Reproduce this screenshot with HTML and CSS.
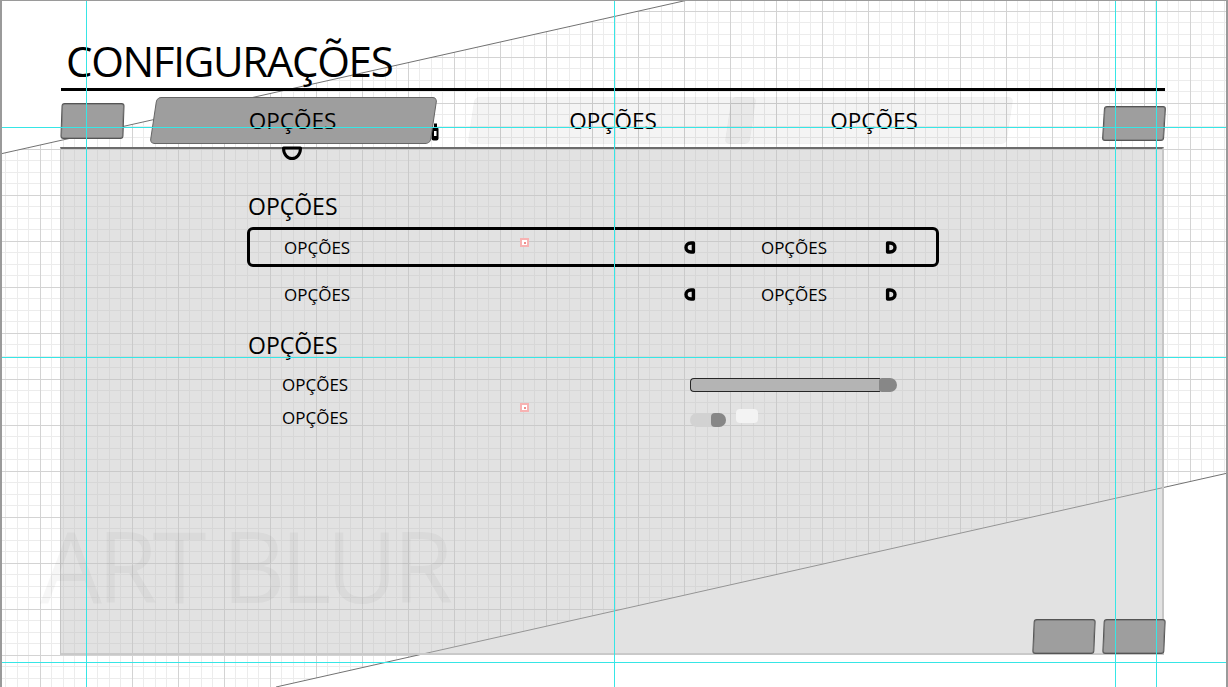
FILE: index.html
```html
<!DOCTYPE html>
<html lang="pt">
<head>
<meta charset="utf-8">
<title>Configurações</title>
<link rel="stylesheet" href="styles.css">
</head>
<body>
<div class="stage">
  <div class="grid-band"><div class="grid"></div></div>
  <svg class="diagonals" width="1228" height="687" viewBox="0 0 1228 687">
    <line x1="0" y1="154" x2="688" y2="0"/>
    <line x1="276" y1="687" x2="1228" y2="473"/>
  </svg>

  <div class="screen">
    <header class="header">
      <h1 class="title">CONFIGURAÇÕES</h1>
      <div class="rule"></div>
    </header>

    <nav class="tabs">
      <button class="btn btn-left" aria-label="anterior"></button>
      <div class="tab tab-active"><span class="tab-label">OPÇÕES</span></div>
      <div class="tab tab-idle tab-second"><span class="tab-label">OPÇÕES</span></div>
      <div class="tab tab-idle tab-third"><span class="tab-label">OPÇÕES</span></div>
      <button class="btn btn-right" aria-label="próximo"></button>
      <svg class="tab-glyph" width="8" height="18" viewBox="0 0 8 18">
        <rect x="3" y="0.5" width="3" height="4.5" fill="#000"/>
        <rect x="0.5" y="4" width="7" height="13.5" rx="2" fill="#000"/>
        <rect x="3" y="8" width="2.5" height="5" fill="#fff"/>
      </svg>
    </nav>

    <section class="panel">
      <div class="group">
        <h2 class="group-title">OPÇÕES</h2>
        <div class="row row-selected">
          <span class="row-label">OPÇÕES</span>
          <div class="selector">
            <svg class="arrow" width="12" height="13" viewBox="0 0 12 13"><path d="M9.4 2H7C3.6 2 2 4.3 2 6.5S3.6 11 7 11H9.4Z"/></svg>
            <span class="selector-value">OPÇÕES</span>
            <svg class="arrow" width="12" height="13" viewBox="0 0 12 13"><path d="M2.6 2H5C8.4 2 10 4.3 10 6.5S8.4 11 5 11H2.6Z"/></svg>
          </div>
        </div>
        <div class="row">
          <span class="row-label">OPÇÕES</span>
          <div class="selector">
            <svg class="arrow" width="12" height="13" viewBox="0 0 12 13"><path d="M9.4 2H7C3.6 2 2 4.3 2 6.5S3.6 11 7 11H9.4Z"/></svg>
            <span class="selector-value">OPÇÕES</span>
            <svg class="arrow" width="12" height="13" viewBox="0 0 12 13"><path d="M2.6 2H5C8.4 2 10 4.3 10 6.5S8.4 11 5 11H2.6Z"/></svg>
          </div>
        </div>
      </div>

      <div class="group group-second">
        <h2 class="group-title">OPÇÕES</h2>
        <div class="srow">
          <span class="srow-label">OPÇÕES</span>
          <div class="slider">
            <div class="slider-track"></div>
            <div class="slider-knob"></div>
          </div>
        </div>
        <div class="srow">
          <span class="srow-label">OPÇÕES</span>
          <div class="toggle-group">
            <div class="toggle"><div class="toggle-knob"></div></div>
            <div class="chip"></div>
          </div>
        </div>
      </div>

      <footer class="panel-footer">
        <button class="btn btn-foot" aria-label="voltar"></button>
        <button class="btn btn-foot" aria-label="aceitar"></button>
      </footer>
    </section>
  </div>

  <div class="watermark">ART BLUR</div>

  <svg class="tab-marker" width="22" height="15" viewBox="0 0 22 15">
    <path d="M2.5 2H19.5C19.5 8.5 15.5 12.5 11 12.5S2.5 8.5 2.5 2Z"/>
  </svg>

  <span class="pin pin-a"></span>
  <span class="pin pin-b"></span>

  <svg class="guides" width="1228" height="687" viewBox="0 0 1228 687">
    <line x1="86.5" y1="0" x2="86.5" y2="687"/>
    <line x1="614.5" y1="0" x2="614.5" y2="687"/>
    <line x1="1115.5" y1="0" x2="1115.5" y2="687"/>
    <line x1="1156.5" y1="0" x2="1156.5" y2="687"/>
    <line x1="0" y1="127.5" x2="1228" y2="127.5"/>
    <line x1="0" y1="357.5" x2="1228" y2="357.5"/>
    <line x1="0" y1="662.5" x2="1228" y2="662.5"/>
  </svg>

  <div class="frame"></div>
</div>
</body>
</html>
```

FILE: styles.css
```css
* {
  box-sizing: border-box;
  margin: 0;
  padding: 0;
}

html,
body {
  width: 1228px;
  height: 687px;
  overflow: hidden;
  background: #ffffff;
}

body {
  font-family: "Open Sans", "Noto Sans", sans-serif;
  color: #111111;
}

.stage {
  position: relative;
  width: 1228px;
  height: 687px;
  overflow: hidden;
  background: #ffffff;
}

/* ---------- canvas background ---------- */
.grid-band {
  position: absolute;
  inset: 0;
  z-index: 0;
  clip-path: polygon(0 154px, 688px 0, 1228px 0, 1228px 473px, 276px 687px, 0 687px);
}

.grid {
  position: absolute;
  left: -6px;
  top: -35px;
  width: 1240px;
  height: 730px;
  background-image:
    repeating-linear-gradient(to right, #d3d3d3 0 1px, transparent 1px 46px),
    repeating-linear-gradient(to bottom, #d3d3d3 0 1px, transparent 1px 46px),
    repeating-linear-gradient(to right, #ececec 0 1px, transparent 1px 11.5px),
    repeating-linear-gradient(to bottom, #ececec 0 1px, transparent 1px 11.5px);
}

.diagonals {
  position: absolute;
  left: 0;
  top: 0;
  z-index: 1;
}

.diagonals line {
  stroke: #727272;
  stroke-width: 1;
}

/* ---------- screen ---------- */
.screen {
  position: relative;
  z-index: 2;
  padding: 40px 0 0 60px;
  width: 1165px;
}

.header {
  display: flex;
  flex-direction: column;
}

.title {
  font-size: 42px;
  line-height: 42px;
  font-weight: 400;
  letter-spacing: -1.3px;
  padding-left: 6px;
  color: #000000;
}

.rule {
  margin: 6px 0 0 1px;
  height: 3px;
  background: #000000;
}

/* ---------- tabs ---------- */
.tabs {
  position: relative;
  display: flex;
  align-items: flex-start;
  height: 47px;
  margin: 6px 0 0 1px;
}

.btn {
  display: block;
  border: 1px solid #555555;
  border-radius: 3px;
  background: #9e9e9e;
  box-shadow: inset 0 0 0 0.5px #6a6a6a;
}

.btn-left {
  width: 63px;
  height: 36px;
  margin-top: 6px;
  transform: skewX(-2deg);
}

.btn-right {
  width: 62px;
  height: 35px;
  margin-top: 9px;
  margin-left: auto;
  transform: skewX(-3.5deg);
}

.tab {
  position: relative;
  height: 47px;
  display: flex;
  align-items: center;
  justify-content: center;
}

.tab::before {
  content: "";
  position: absolute;
  inset: 0;
  border-radius: 5px;
  transform: skewX(-8.5deg);
}

.tab-label {
  position: relative;
  font-size: 22.5px;
  line-height: 47px;
  color: #000000;
}

.tab-active {
  z-index: 1;
  width: 281px;
  margin-left: 29px;
  padding-right: 2px;
}

.tab-active::before {
  background: #9e9e9e;
  border: 1px solid #666666;
}

.tab-idle::before {
  background: rgba(0, 0, 0, 0.042);
  border: 1px solid rgba(0, 0, 0, 0.015);
}

.tab-second {
  width: 282px;
  margin-left: 37px;
  padding-left: 2px;
}

.tab-third {
  width: 282px;
  margin-left: -25px;
  padding-left: 10px;
}

.tab-glyph {
  position: absolute;
  left: 370px;
  top: 26px;
  z-index: 0;
}

/* ---------- panel ---------- */
.panel {
  display: flex;
  flex-direction: column;
  width: 1104px;
  height: 508px;
  margin-top: 3px;
  padding: 42px 0 0 186px;
  background: rgba(190, 190, 190, 0.45);
  border-top: 2px solid #6c6c6c;
  border-left: 1px solid #c4c4c4;
  border-right: 2px solid #c6c6c6;
  border-bottom: 2px solid #c9c9c9;
}

.group {
  display: flex;
  flex-direction: column;
}

.group-second {
  margin-top: 16px;
}

.group-title {
  font-size: 23px;
  line-height: 30px;
  font-weight: 400;
  padding-left: 1px;
  color: #000000;
}

.row {
  display: flex;
  align-items: center;
  width: 692px;
  height: 40px;
  margin-top: 7px;
  padding-left: 34px;
  border: 3px solid transparent;
  border-radius: 6px;
  font-size: 17px;
}

.row-selected {
  margin-top: 6px;
  border-color: #000000;
}

.row-label {
  width: 399px;
  color: #000000;
}

.selector {
  display: flex;
  align-items: center;
  width: 214px;
  padding-left: 1px;
}

.selector-value {
  flex: 1;
  text-align: center;
  padding-left: 7px;
  color: #000000;
}

.arrow {
  display: block;
}

.arrow path {
  fill: none;
  stroke: #000000;
  stroke-width: 3.4;
  stroke-linejoin: round;
}

.srow {
  display: flex;
  align-items: center;
  height: 33px;
  padding-left: 35px;
  font-size: 17px;
}

.group-second .srow:first-of-type {
  margin-top: 8px;
}

.srow-label {
  width: 408px;
  color: #000000;
}

.slider {
  display: flex;
  align-items: center;
  width: 207px;
  height: 14px;
}

.slider-track {
  flex: 1;
  height: 14px;
  background: #b4b4b4;
  border: 1.5px solid #262626;
  border-right: none;
  border-radius: 4px 0 0 4px;
}

.slider-knob {
  width: 18px;
  height: 14px;
  margin-left: -1px;
  border-radius: 3px 7px 7px 3px;
  background: #878787;
}

.toggle-group {
  display: flex;
  align-items: flex-start;
  gap: 10px;
}

.toggle {
  display: flex;
  width: 36px;
  height: 14px;
  margin-top: 5px;
  border-radius: 7px;
  background: #d2d2d2;
}

.toggle-knob {
  width: 15px;
  height: 14px;
  margin-left: auto;
  border-radius: 4px 7px 7px 4px;
  background: #878787;
}

.chip {
  width: 22px;
  height: 14px;
  margin-top: 1px;
  border-radius: 4px;
  background: #f3f3f3;
}

.panel-footer {
  display: flex;
  justify-content: flex-end;
  gap: 8px;
  margin-top: auto;
  margin-right: -3px;
  margin-bottom: -1px;
}

.btn-foot {
  width: 62px;
  height: 35px;
  transform: skewX(-2.5deg);
}

/* ---------- overlays ---------- */
.watermark {
  position: absolute;
  left: 40px;
  top: 516px;
  z-index: 3;
  font-size: 98px;
  line-height: 98px;
  letter-spacing: -5px;
  color: rgba(0, 0, 0, 0.035);
  white-space: nowrap;
}

.tab-marker {
  position: absolute;
  left: 281px;
  top: 146px;
  z-index: 4;
}

.tab-marker path {
  fill: none;
  stroke: #000000;
  stroke-width: 3;
  stroke-linejoin: round;
}

.pin {
  position: absolute;
  z-index: 4;
  width: 9px;
  height: 9px;
  border: 2px solid #f7b2b2;
  background: #ffffff;
}

.pin::after {
  content: "";
  position: absolute;
  left: 1.5px;
  top: 1.5px;
  width: 2px;
  height: 2px;
  background: #ee8c8c;
}

.pin-a {
  left: 520px;
  top: 238px;
}

.pin-b {
  left: 520px;
  top: 403px;
}

.guides {
  position: absolute;
  left: 0;
  top: 0;
  z-index: 5;
}

.guides line {
  stroke: #36e6e6;
  stroke-width: 1;
}

.frame {
  position: absolute;
  inset: 0;
  z-index: 6;
  border-top: 1px solid #9a9a9a;
  border-left: 2px solid #9a9a9a;
  border-right: 2px solid #9a9a9a;
  pointer-events: none;
}
```
